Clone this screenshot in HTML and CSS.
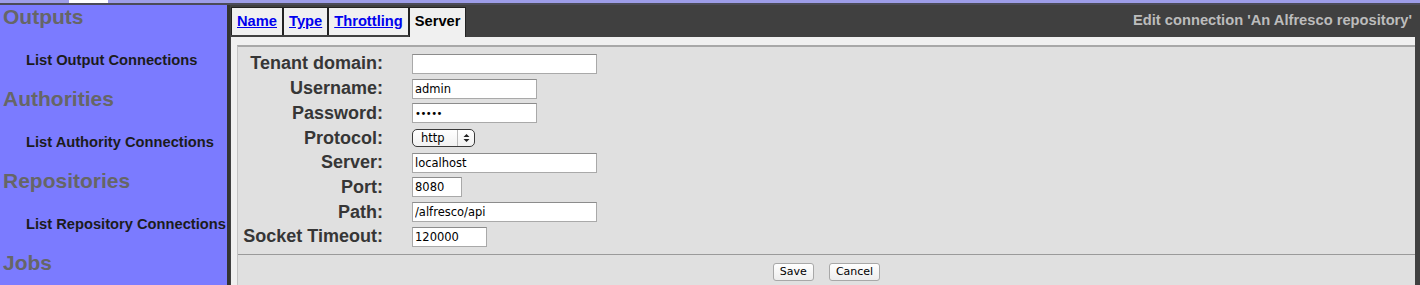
FILE: index.html
```html
<!DOCTYPE html>
<html lang="en">
<head>
    <meta charset="UTF-8">
    <title>Edit connection</title>
    <link rel="stylesheet" href="styles.css">
</head>
<body>
    <div class="topbar"><span class="topbar-tab"></span></div>
    <div class="page">
        <nav class="sidebar">
            <h2>Outputs</h2>
            <a class="nav-link" href="#">List Output Connections</a>
            <h2>Authorities</h2>
            <a class="nav-link" href="#">List Authority Connections</a>
            <h2>Repositories</h2>
            <a class="nav-link" href="#">List Repository Connections</a>
            <h2>Jobs</h2>
        </nav>

        <main class="main">
            <div class="header">
                <div class="tabs">
                    <a class="tab" href="#">Name</a>
                    <a class="tab" href="#">Type</a>
                    <a class="tab" href="#">Throttling</a>
                    <span class="tab active">Server</span>
                </div>
                <div class="title">Edit connection 'An Alfresco repository'</div>
            </div>

            <div class="frame">
                <div class="panel">
                    <form class="form">
                        <label>Tenant domain:</label>
                        <div><input class="w-long" type="text" value=""></div>
                        <label>Username:</label>
                        <div><input class="w-mid" type="text" value="admin"></div>
                        <label>Password:</label>
                        <div><input class="w-mid password" type="text" value="&#8226;&#8226;&#8226;&#8226;&#8226;"></div>
                        <label>Protocol:</label>
                        <div>
                            <span class="select">
                                <span class="select-value">http</span>
                                <span class="select-arrows">
                                    <svg width="7" height="10" viewBox="0 0 7 10">
                                        <path d="M3.5 1 L6.5 4 L0.5 4 Z M3.5 9 L6.5 6 L0.5 6 Z" fill="#222"/>
                                    </svg>
                                </span>
                            </span>
                        </div>
                        <label>Server:</label>
                        <div><input class="w-long" type="text" value="localhost"></div>
                        <label>Port:</label>
                        <div><input class="w-short" type="text" value="8080"></div>
                        <label>Path:</label>
                        <div><input class="w-long" type="text" value="/alfresco/api"></div>
                        <label>Socket Timeout:</label>
                        <div><input class="w-timeout" type="text" value="120000"></div>
                    </form>
                    <hr class="rule">
                    <div class="actions">
                        <button type="button">Save</button>
                        <button type="button">Cancel</button>
                    </div>
                </div>
            </div>
        </main>
    </div>
</body>
</html>
```

FILE: styles.css
```css
* {
    margin: 0;
    padding: 0;
    box-sizing: border-box;
}

body {
    width: 1420px;
    height: 285px;
    overflow: hidden;
    background: #e0e0e0;
    font-family: "Liberation Sans", Arial, sans-serif;
}

.topbar {
    height: 5px;
    background: #9d9de8;
    border-bottom: 2px solid #4b4b58;
}

.topbar-tab {
    display: block;
    margin-left: 69px;
    width: 39px;
    height: 3px;
    background: #fff;
}

.page {
    display: flex;
    height: 280px;
}

/* Left navigation */
.sidebar {
    width: 230px;
    flex-shrink: 0;
    background: #7b7bff;
    border-right: 3px solid #333;
    display: flex;
    flex-direction: column;
}

.sidebar h2 {
    font-size: 21px;
    line-height: 24px;
    font-weight: bold;
    color: #666;
    padding-left: 3px;
    margin-bottom: 20.5px;
}

.nav-link {
    display: block;
    font-size: 14.7px;
    line-height: 20px;
    font-weight: bold;
    color: #1c1c1c;
    text-decoration: none;
    padding-left: 26px;
    margin-bottom: 17.5px;
    white-space: nowrap;
}

/* Main area */
.main {
    flex: 1;
    display: flex;
    flex-direction: column;
    background: #404040;
    padding: 0 5px 0 1px;
}

.header {
    height: 32px;
    display: flex;
    justify-content: space-between;
    align-items: flex-start;
}

.tabs {
    display: flex;
    margin-top: 2px;
}

.tab {
    height: 28px;
    line-height: 27px;
    padding: 0 5px;
    background: #f0f0f0;
    border: 1px solid #222;
    border-bottom: none;
    font-size: 14.7px;
    font-weight: bold;
    color: #0000ee;
    text-decoration: underline;
}

.tab.active {
    height: 30px;
    color: #000;
    text-decoration: none;
}

.title {
    align-self: center;
    margin-right: 3px;
    margin-top: -2px;
    font-size: 14.7px;
    font-weight: bold;
    color: #bcbcbc;
}

.frame {
    flex: 1;
    background: #f0f0f0;
    padding: 8px 0 0 6px;
    display: flex;
}

.panel {
    flex: 1;
    background: #e0e0e0;
    border-top: 2px solid #a8a8a8;
    border-left: 1px solid #c4c4c4;
    padding-top: 4.6px;
}

/* Form */
.form {
    display: grid;
    grid-template-columns: 140px auto;
    grid-auto-rows: 24.7px;
    column-gap: 29px;
    margin-left: 5px;
    align-items: center;
}

.form label {
    text-align: right;
    white-space: nowrap;
    font-size: 18px;
    font-weight: bold;
    color: #363636;
}

.form input {
    display: block;
    height: 20px;
    border: 1px solid #a9a9a9;
    border-top-color: #8c8c8c;
    background: #fff;
    padding: 0 2px;
    font-family: "DejaVu Sans", sans-serif;
    font-size: 11.5px;
    color: #000;
}

.form input.password {
    font-size: 10px;
    letter-spacing: -0.5px;
}

.w-long { width: 185px; }
.w-mid { width: 125px; }
.w-short { width: 50px; }
.w-timeout { width: 75px; }

.select {
    display: flex;
    align-items: center;
    width: 63px;
    height: 18px;
    border: 1px solid #3a3a3a;
    border-radius: 5px;
    background: linear-gradient(#fff, #f2f2f2);
    font-family: "DejaVu Sans", sans-serif;
    font-size: 11.5px;
}

.select-value {
    flex: 1;
    padding-left: 8px;
}

.select-arrows {
    width: 17px;
    height: 100%;
    border-left: 1px solid #bbb;
    display: flex;
    align-items: center;
    justify-content: center;
}

.rule {
    border: none;
    border-top: 1px solid #9a9a9a;
    margin-top: 4.5px;
}

.actions {
    display: flex;
    justify-content: center;
    gap: 15px;
    margin-top: 8px;
}

.actions button {
    height: 18px;
    padding: 0 6px;
    border: 1px solid #a8a8a8;
    border-radius: 3px;
    background: linear-gradient(#fff, #ededed);
    font-family: "DejaVu Sans", sans-serif;
    font-size: 11px;
    color: #000;
}
```
